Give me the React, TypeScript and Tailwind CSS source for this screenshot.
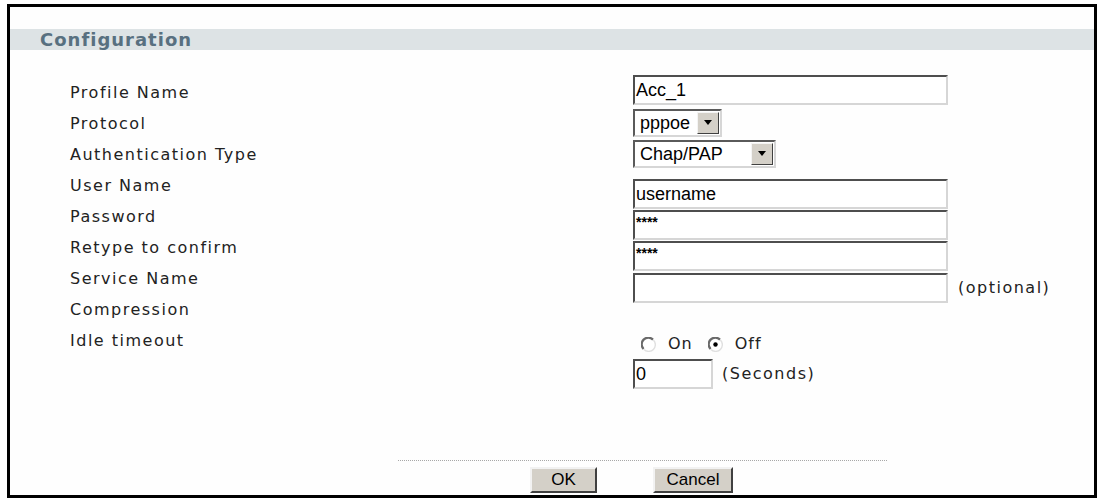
import React from "react";

const verdana = { fontFamily: "'DejaVu Sans', Verdana, sans-serif" };
const arial = { fontFamily: "'Liberation Sans', Arial, sans-serif" };

const labels = [
  "Profile Name",
  "Protocol",
  "Authentication Type",
  "User Name",
  "Password",
  "Retype to confirm",
  "Service Name",
  "Compression",
  "Idle timeout",
];

function TextBox({ value, w, mt, small }: { value: string; w: string; mt: string; small?: boolean }) {
  return (
    <div
      className={`${w} ${mt} h-[30px] bg-white border-2 border-t-[#4e4e4e] border-l-[#4e4e4e] border-r-[#d6d6d6] border-b-[#d6d6d6] flex ${
        small ? "items-start pt-[1px] text-[14px] font-bold leading-[18px]" : "items-center text-[18px]"
      } pl-[1px] text-black`}
      style={arial}
    >
      {value}
    </div>
  );
}

function Select({ value, w, mt }: { value: string; w: string; mt: string }) {
  return (
    <div
      className={`${w} ${mt} h-[28px] bg-white border-2 border-t-[#5a5a5a] border-l-[#5a5a5a] border-r-[#d6d6d6] border-b-[#d6d6d6] flex items-stretch`}
      style={arial}
    >
      <div className="flex-1 flex items-center pl-[5px] text-[18px] text-black">{value}</div>
      <div className="w-[22px] m-[1px] bg-[#d4d0c8] border border-t-[#f4f4f4] border-l-[#f4f4f4] border-r-[#404040] border-b-[#404040] flex items-center justify-center">
        <svg width="10" height="6" viewBox="0 0 10 6">
          <path d="M1 0 H9 L5 5 Z" fill="#000" />
        </svg>
      </div>
    </div>
  );
}

function Radio({ checked }: { checked?: boolean }) {
  return (
    <svg width="15" height="15" viewBox="0 0 15 15">
      <circle cx="7.5" cy="7.5" r="6.3" fill="#fff" />
      <path d="M2.6 12 A6.3 6.3 0 0 1 12 2.6" stroke="#6a6a6a" strokeWidth="2.2" fill="none" />
      <path d="M12.4 3 A6.3 6.3 0 0 1 3 12.4" stroke="#e0e0e0" strokeWidth="1.4" fill="none" />
      {checked && <circle cx="7.5" cy="7.5" r="2.2" fill="#000" />}
    </svg>
  );
}

function Btn({ label, w, ml }: { label: string; w: string; ml: string }) {
  return (
    <div
      className={`${w} ${ml} h-[26px] bg-[#d4d0c8] border-2 border-t-[#f2f2f2] border-l-[#f2f2f2] border-r-[#404040] border-b-[#404040] flex items-center justify-center text-[17px] text-black`}
      style={arial}
    >
      {label}
    </div>
  );
}

export default function App() {
  return (
    <div className="w-[1101px] h-[498px] bg-white overflow-hidden pt-[4px] pl-[7px]">
      <div className="w-[1090px] h-[494px] border-[3px] border-black bg-[#fefefe]">
        {/* header band */}
        <div className="mt-[22px] h-[21px] bg-[#dde3e5] flex items-center pl-[30px]">
          <span className="text-[18px] font-bold tracking-[1px] text-[#587080]" style={verdana}>
            Configuration
          </span>
        </div>

        {/* form */}
        <div className="h-[410px] flex pl-[60px]">
          <div className="w-[563px] pt-[27px] text-[16px] tracking-[1.5px] text-[#222]" style={verdana}>
            {labels.map((l) => (
              <div key={l} className="h-[31px] leading-[31px]">
                {l}
              </div>
            ))}
          </div>

          <div className="flex flex-col pt-[25px]">
            <TextBox value="Acc_1" w="w-[315px]" mt="mt-0" />
            <Select value="pppoe" w="w-[89px]" mt="mt-[4px]" />
            <Select value="Chap/PAP" w="w-[143px]" mt="mt-[3px]" />
            <TextBox value="username" w="w-[315px]" mt="mt-[11px]" />
            <TextBox value="****" w="w-[315px]" mt="mt-[1px]" small />
            <TextBox value="****" w="w-[315px]" mt="mt-[1px]" small />
            <div className="flex items-center mt-[2px]">
              <TextBox value="" w="w-[315px]" mt="mt-0" />
              <span className="ml-[10px] text-[16px] tracking-[1.5px] text-[#222]" style={verdana}>
                (optional)
              </span>
            </div>
            <div className="flex items-center mt-[29px] pl-[8px] text-[16px] tracking-[1px] text-[#222]" style={verdana}>
              <Radio />
              <span className="ml-[12px]">On</span>
              <span className="ml-[15px] flex">
                <Radio checked />
              </span>
              <span className="ml-[12px]">Off</span>
            </div>
            <div className="flex items-center mt-[3px]">
              <TextBox value="0" w="w-[80px]" mt="mt-0" />
              <span className="ml-[9px] text-[16px] tracking-[1.5px] text-[#222]" style={verdana}>
                (Seconds)
              </span>
            </div>
          </div>
        </div>

        {/* footer */}
        <div className="ml-[388px] w-[489px] border-t border-dotted border-[#a8a8a8]" />
        <div className="flex mt-[6px]">
          <Btn label="OK" w="w-[67px]" ml="ml-[520px]" />
          <Btn label="Cancel" w="w-[80px]" ml="ml-[56px]" />
        </div>
      </div>
    </div>
  );
}
